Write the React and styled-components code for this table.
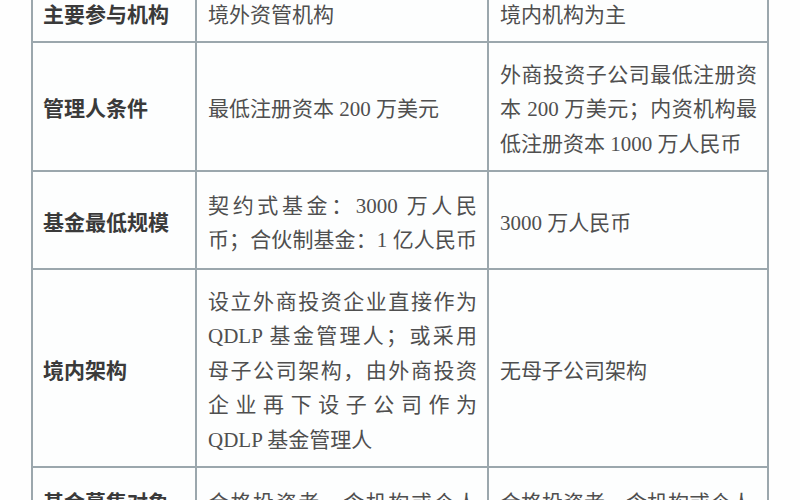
import React from "react";
import styled, { createGlobalStyle } from "styled-components";

const GlobalStyle = createGlobalStyle`
  html, body {
    margin: 0;
    padding: 0;
    background: #ffffff;
  }
  body {
    font-family: "Liberation Serif", "Noto Sans CJK SC", serif;
  }
`;

const Page = styled.div`
  width: 800px;
  height: 500px;
  overflow: hidden;
  background: #fefefe;
`;

// the lines of the table are the grid background showing through the gaps
const Table = styled.div`
  display: grid;
  grid-template-columns: 162px 290px 278px;
  grid-template-rows: 58px 127px 96px 196px 64px;
  gap: 2px;
  padding: 2px;
  width: max-content;
  margin: -19px 0 0 31px;
  background: #9ba7ad;
`;

const Cell = styled.div`
  display: flex;
  flex-direction: column;
  justify-content: center;
  padding: 6px 10px 0 11px;
  background: #fdfefe;
  font-size: 21px;
  line-height: 34.5px;
  color: #4f4f4f;
`;

const Label = styled(Cell)`
  padding-left: 10px;
  font-weight: 700;
  color: #3a3a3a;
`;

const Line = styled.div`
  white-space: nowrap;
  text-align: ${(p) => (p.$spread ? "justify" : "left")};
  text-align-last: ${(p) => (p.$spread ? "justify" : "left")};
`;

const rows = [
  {
    label: "主要参与机构",
    left: ["境外资管机构"],
    right: ["境内机构为主"],
  },
  {
    label: "管理人条件",
    left: ["最低注册资本 200 万美元"],
    right: [
      "外商投资子公司最低注册资",
      "本 200 万美元；内资机构最",
      "低注册资本 1000 万人民币",
    ],
    rightSpread: 2,
  },
  {
    label: "基金最低规模",
    left: ["契约式基金：3000 万人民", "币；合伙制基金：1 亿人民币"],
    leftSpread: 2,
    right: ["3000 万人民币"],
  },
  {
    label: "境内架构",
    left: [
      "设立外商投资企业直接作为",
      "QDLP 基金管理人；或采用",
      "母子公司架构，由外商投资",
      "企业再下设子公司作为",
      "QDLP 基金管理人",
    ],
    leftSpread: 4,
    right: ["无母子公司架构"],
  },
  {
    label: "基金募集对象",
    left: ["合格投资者，含机构或个人"],
    leftSpread: 1,
    right: ["合格投资者，含机构或个人"],
  },
];

const Lines = ({ lines, spread = 0 }) =>
  lines.map((text, i) => (
    <Line key={i} $spread={i < spread}>
      {text}
    </Line>
  ));

export default function App() {
  return (
    <Page lang="zh-CN">
      <GlobalStyle />
      <Table>
        {rows.map((row) => (
          <React.Fragment key={row.label}>
            <Label>{row.label}</Label>
            <Cell>
              <Lines lines={row.left} spread={row.leftSpread} />
            </Cell>
            <Cell>
              <Lines lines={row.right} spread={row.rightSpread} />
            </Cell>
          </React.Fragment>
        ))}
      </Table>
    </Page>
  );
}
